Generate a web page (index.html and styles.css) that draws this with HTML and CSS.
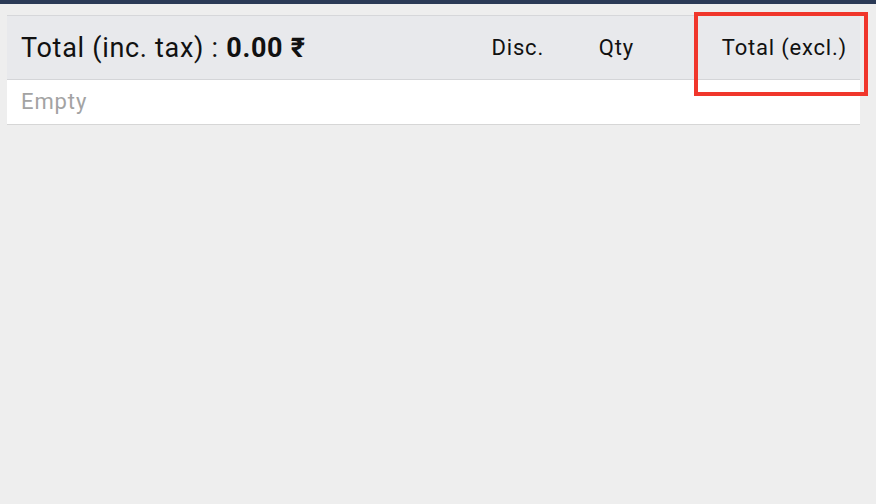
FILE: index.html
```html
<!DOCTYPE html>
<html lang="en">
<head>
  <meta charset="UTF-8" />
  <meta name="viewport" content="width=device-width, initial-scale=1" />
  <title>Cart</title>
  <link rel="stylesheet" href="styles.css">
</head>
<body>
  <div class="topbar"></div>
  <div class="page">
    <div class="cart">
      <div class="cart-head">
        <div class="grand">Total (inc. tax) : <b>0.00 ₹</b></div>
        <div class="col col-disc">Disc.</div>
        <div class="col col-qty">Qty</div>
        <div class="col col-total">Total (excl.)</div>
      </div>
      <div class="cart-row empty">Empty</div>
      <div class="highlight"></div>
    </div>
  </div>
</body>
</html>
```

FILE: styles.css
```css
* {
  margin: 0;
  padding: 0;
  box-sizing: border-box;
}
html, body {
  width: 100%;
  height: 100%;
  background: #eeeeee;
  font-family: Roboto, "Noto Sans", sans-serif;
  color: #111;
  overflow: hidden;
}
.topbar {
  height: 4px;
  background: #2b3a56;
}
.page {
  padding: 11px 16px 0 7px;
}
.cart {
  position: relative;
  border-top: 1px solid #d6d7da;
}
.cart-head {
  display: flex;
  align-items: center;
  height: 64px;
  background: #e8e9ec;
  border-bottom: 1px solid #d4d5d8;
  padding: 0 13px 0 14px;
}
.grand {
  flex: 1;
  font-size: 27px;
  letter-spacing: 0.7px;
  padding-top: 1px;
}
.grand b {
  font-weight: 700;
}
.col {
  font-size: 22px;
  letter-spacing: 0.8px;
  text-align: right;
}
.col-disc {
  width: 80px;
}
.col-qty {
  width: 90px;
}
.col-total {
  width: 213px;
}
.cart-row {
  height: 45px;
  background: #fff;
  border-bottom: 1px solid #d6d6d6;
  padding: 9px 14px 0;
  font-size: 22px;
  letter-spacing: 0.9px;
}
.empty {
  color: #a3a3a3;
}
.highlight {
  position: absolute;
  left: 687px;
  top: -4px;
  width: 174px;
  height: 84px;
  border: 4px solid #f0362b;
}
```
